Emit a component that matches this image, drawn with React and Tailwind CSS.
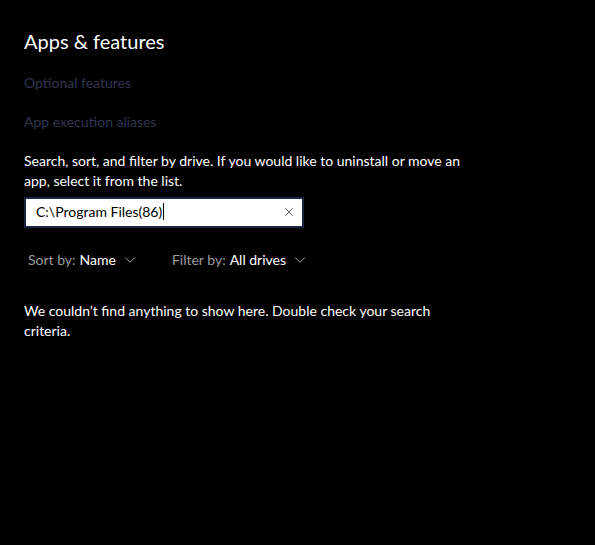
import { X, ChevronDown } from "lucide-react";

// Settings page: Apps & features, with empty search result
export default function App() {
  return (
    <div
      className="w-[595px] h-[545px] bg-black text-white overflow-hidden"
      style={{ fontFamily: "Lato, 'Noto Sans', sans-serif" }}
    >
      <div className="pl-6 pt-[27px]">
        <h1 className="text-[20px] leading-[28px] font-normal">Apps &amp; features</h1>

        <div className="mt-[18px] flex flex-col gap-[19px] text-[14px] leading-[20px] text-[#30354f]">
          <a className="block">Optional features</a>
          <a className="block">App execution aliases</a>
        </div>

        <p className="mt-[19px] w-[450px] text-[14px] leading-[20px]">
          Search, sort, and filter by drive. If you would like to uninstall or move an app, select it from the list.
        </p>

        <div className="mt-[6px] w-[280px] h-[31px] bg-white border-2 border-[#1b2440] flex items-center pl-[10px] pr-[6px] pb-[2px]">
          <span className="text-[14px] text-black flex-1 flex items-center">
            C:\Program Files(86)
            <span className="inline-block w-px h-[17px] bg-black ml-px" />
          </span>
          <X size={14} strokeWidth={1.3} className="text-[#333]" />
        </div>

        <div className="mt-[22px] flex items-center text-[14px] leading-[20px] pl-1">
          <span className="text-[#9a9a9a]">Sort by:</span>
          <span className="ml-1">Name</span>
          <ChevronDown size={18} strokeWidth={1.2} className="ml-[5px] text-[#bbb]" />
          <span className="ml-[33px] text-[#9a9a9a]">Filter by:</span>
          <span className="ml-1">All drives</span>
          <ChevronDown size={18} strokeWidth={1.2} className="ml-[5px] text-[#bbb]" />
        </div>

        <p className="mt-[31px] w-[450px] text-[14px] leading-[20px]">
          We couldn’t find anything to show here. Double check your search criteria.
        </p>
      </div>
    </div>
  );
}
